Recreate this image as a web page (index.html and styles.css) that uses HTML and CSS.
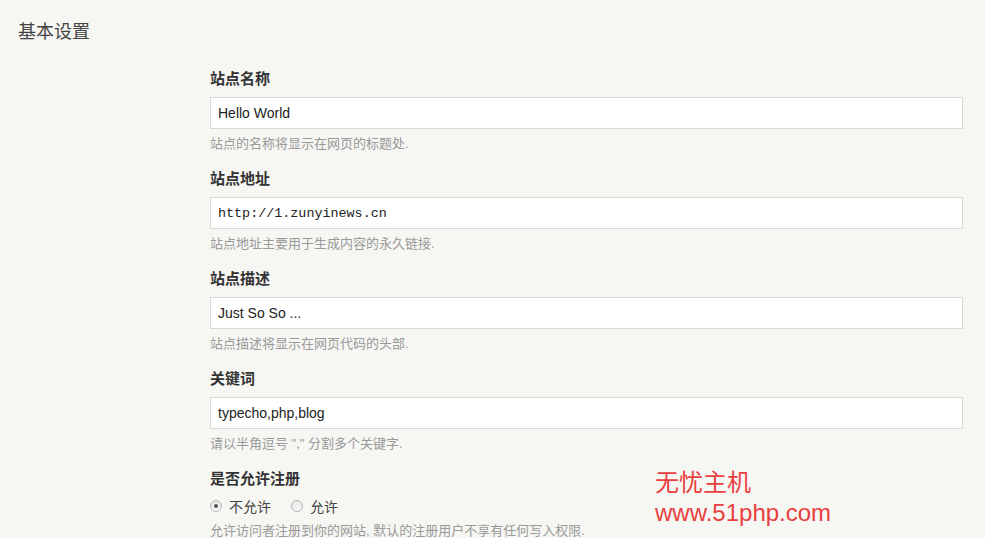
FILE: index.html
```html
<!DOCTYPE html>
<html lang="zh-CN">
  <head>
    <meta charset="UTF-8" />
    <title>基本设置</title>
    <link rel="stylesheet" href="styles.css">
  </head>
  <body>
    <h2 class="page-title">基本设置</h2>
    <div class="settings">
      <div class="field">
        <label class="field-label" for="title">站点名称</label>
        <input class="text" type="text" id="title" value="Hello World" />
        <p class="desc">站点的名称将显示在网页的标题处.</p>
      </div>
      <div class="field">
        <label class="field-label" for="url">站点地址</label>
        <input class="text mono" type="text" id="url" value="http://1.zunyinews.cn" />
        <p class="desc">站点地址主要用于生成内容的永久链接.</p>
      </div>
      <div class="field">
        <label class="field-label" for="description">站点描述</label>
        <input class="text" type="text" id="description" value="Just So So ..." />
        <p class="desc">站点描述将显示在网页代码的头部.</p>
      </div>
      <div class="field">
        <label class="field-label" for="keywords">关键词</label>
        <input class="text" type="text" id="keywords" value="typecho,php,blog" />
        <p class="desc">请以半角逗号 "," 分割多个关键字.</p>
      </div>
      <div class="field">
        <span class="field-label">是否允许注册</span>
        <div class="radios">
          <span class="radio checked"></span><span class="radio-text">不允许</span>
          <span class="radio"></span><span class="radio-text">允许</span>
        </div>
        <p class="desc">允许访问者注册到你的网站, 默认的注册用户不享有任何写入权限.</p>
      </div>
    </div>
    <div class="watermark">
      <div class="wm-name">无忧主机</div>
      <div class="wm-url">www.51php.com</div>
    </div>
  </body>
</html>
```

FILE: styles.css
```css
body {
  margin: 0;
  background: #f6f6f3;
  font-family: Arial, "Liberation Sans", "Noto Sans CJK SC", sans-serif;
  color: #444;
  height: 538px;
  overflow: hidden;
}
.page-title {
  margin: 0;
  padding: 20px 0 0 18px;
  font-size: 18px;
  line-height: 24px;
  font-weight: normal;
  color: #444;
}
.settings {
  margin: 25px 22px 0 210px;
}
.field {
  margin-bottom: 16px;
}
.field-label {
  display: block;
  font-size: 15px;
  line-height: 20px;
  font-weight: bold;
  color: #333;
  margin-bottom: 8px;
}
.text {
  display: block;
  width: 100%;
  height: 32px;
  box-sizing: border-box;
  border: 1px solid #d9d9d6;
  background: #fff;
  padding: 0 7px;
  font-family: Arial, "Liberation Sans", sans-serif;
  font-size: 14px;
  color: #222;
  margin: 0;
}
.mono {
  font-family: "Liberation Mono", "DejaVu Sans Mono", monospace;
  font-size: 13.4px;
}
.desc {
  margin: 6px 0 0;
  font-size: 13px;
  line-height: 18px;
  color: #999;
}
.radios {
  display: flex;
  align-items: center;
  height: 20px;
  margin-top: -1px;
}
.radio {
  width: 10px;
  height: 10px;
  border: 1px solid #b5b5b5;
  border-radius: 50%;
  background: linear-gradient(#e6e6e6, #fafafa);
  position: relative;
  margin-right: 7px;
}
.radio.checked::after {
  content: "";
  position: absolute;
  left: 3px;
  top: 3px;
  width: 4px;
  height: 4px;
  border-radius: 50%;
  background: #555;
}
.radio-text {
  font-size: 14px;
  color: #444;
  margin-right: 20px;
}
.watermark {
  position: absolute;
  left: 655px;
  top: 470px;
  color: #e8403f;
}
.wm-name {
  font-size: 24px;
  line-height: 30px;
  margin-top: -2px;
}
.wm-url {
  font-size: 24px;
  line-height: 30px;
}
```
